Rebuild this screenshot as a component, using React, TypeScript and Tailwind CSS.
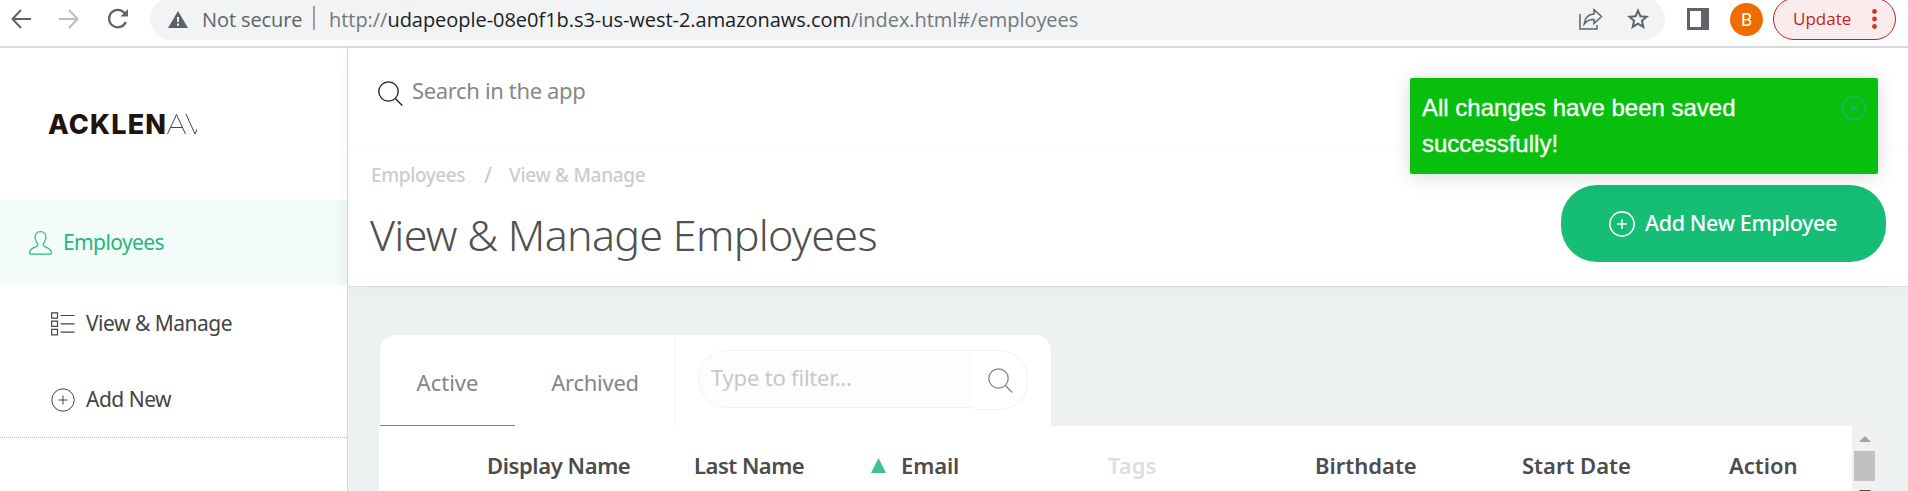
import React from "react";

type IconProps = { className?: string };

const BackArrow = ({ className = "" }: IconProps) => (
  <svg className={className} viewBox="0 0 20 20" fill="none" stroke="currentColor" strokeWidth="2">
    <path d="M20 10H2M10 1L1.5 10L10 19" />
  </svg>
);

const SearchIcon = ({ className = "" }: IconProps) => (
  <svg className={className} viewBox="0 0 25 25" fill="none" stroke="currentColor" strokeWidth="1.3">
    <circle cx="10.5" cy="10.5" r="9.7" />
    <path d="M17.3 17.5L24.3 24.5" />
  </svg>
);

const PlusCircle = ({ className = "" }: IconProps) => (
  <svg className={className} viewBox="0 0 24 24" fill="none" stroke="currentColor">
    <circle cx="12" cy="12" r="11.2" />
    <path d="M12 7.5V16.5M7.5 12H16.5" />
  </svg>
);

const UserIcon = () => (
  <svg className="h-6 w-[23px]" viewBox="0 0 23 24" fill="none" stroke="#2dba78" strokeWidth="1.2">
    <path d="M8.6 12.2C7 11 6.6 9.6 6.5 8.3C5.9 7.9 5.8 6.6 6.3 6C6 2.6 8 .7 11.5 .7S17 2.6 16.7 6C17.2 6.6 17.1 7.9 16.5 8.3C16.4 9.6 16 11 14.4 12.2V14.6C15 16 22.3 17.2 22.3 21V22.4Q22.3 23.2 21.4 23.2H1.6Q.7 23.2 .7 22.4V21C.7 17.2 8 16 8.6 14.6Z" />
  </svg>
);

const ListIcon = () => (
  <svg className="h-6 w-6" viewBox="0 0 24 24" fill="none" stroke="#444" strokeWidth="1.2">
    <path d="M.7 .9H6.5V6.1H.7ZM.7 9.1H6.5V14.3H.7ZM.7 17.4H6.5V22.8H.7ZM9.5 3.5H23.5M9.5 11.9H23.5M9.5 20.2H23.5" />
  </svg>
);

const columns = [
  { label: "Display Name", cls: "tracking-[-0.4px]" },
  { label: "Last Name", cls: "tracking-[-0.5px]" },
  { label: "Email", cls: "tracking-[-0.1px]", sorted: true },
  { label: "Tags", cls: "text-[#dedede]" },
  { label: "Birthdate", cls: "" },
  { label: "Start Date", cls: "" },
  { label: "Action", cls: "" },
];

function BrowserBar() {
  return (
    <header className="flex h-12 shrink-0 items-start overflow-hidden border-b-2 border-[#dcdcdc] bg-white font-['Open_Sans',sans-serif]">
      <div className="flex w-[150px] shrink-0 items-center gap-7 pt-[7px] pl-[11px] text-[#5f6368]">
        <BackArrow className="h-5 w-5" />
        <BackArrow className="h-5 w-5 rotate-180 text-[#bcbdbf]" />
        <svg className="h-6 w-[22px]" viewBox="0 0 22 24" fill="none" stroke="currentColor" strokeWidth="2.2">
          <path d="M17.5 6A8.7 8.7 0 1 0 18.8 15" />
          <path d="M21 2V9.5H13.5Z" fill="currentColor" stroke="none" />
        </svg>
      </div>
      <div className="-mt-0.5 flex h-[42px] w-[1515px] shrink-0 items-center rounded-full bg-[#f1f3f4] pl-[18px] text-[20px] text-[#5f6368]">
        <svg className="h-[17px] w-5" viewBox="0 0 20 17">
          <path d="M10 0L20 17H0Z" fill="#5f6368" />
          <path d="M9 6H11V11H9ZM9 12.6H11V14.7H9Z" fill="#f1f3f4" />
        </svg>
        <span className="mt-0.5 ml-[14px] w-[111px] shrink-0 tracking-[-0.1px] whitespace-nowrap">Not secure</span>
        <span className="-mt-0.5 h-6 w-0.5 bg-[#9aa0a6]" />
        <span className="mt-0.5 ml-[14px] tracking-[-0.04px] whitespace-nowrap text-[#73777b]">
          http://<span className="text-[#202124]">udapeople-08e0f1b.s3-us-west-2.amazonaws.com</span>/index.html#/employees
        </span>
        <svg className="mr-[24px] ml-auto h-[22px] w-6" viewBox="0 0 24 22" fill="none" stroke="#5f6368" strokeWidth="1.5">
          <path d="M1 6V21H18V17M15 1.8V6C9 6.3 6 9.5 5.2 16C8 12.3 11 11.3 15 11.4V15.5L22.5 8.5Z" />
        </svg>
        <svg className="mr-4 h-[22px] w-[22px]" viewBox="0 0 22 22" fill="none" stroke="#5f6368" strokeWidth="2">
          <path d="M11 2.6L13.4 8.2L19.6 8.8L14.9 12.8L16.3 18.9L11 15.7L5.7 18.9L7.1 12.8L2.4 8.8L8.6 8.2Z" />
        </svg>
      </div>
      <svg className="mt-2 ml-[22px] h-[22px] w-[22px] shrink-0" viewBox="0 0 22 22" fill="#5f6368">
        <path fillRule="evenodd" d="M0 0H22V22H0ZM3 3V19H14V3Z" />
      </svg>
      <div className="mt-[3px] ml-[21px] flex h-[33px] w-[33px] shrink-0 items-center justify-center rounded-full bg-[#f06c00] font-['Roboto',sans-serif] text-[18px] text-white">B</div>
      <div className="-mt-0.5 ml-[10px] flex h-[42px] w-[123px] shrink-0 items-center rounded-full border-[1.5px] border-[#c5221f] bg-[#faecec] pl-[19px] text-[17px] text-[#c5221f]">
        <span className="w-[79px]">Update</span>
        <svg className="h-5 w-[5px]" viewBox="0 0 5 20" fill="#d93025">
          <circle cx="2.5" cy="2.5" r="2.4" />
          <circle cx="2.5" cy="10" r="2.4" />
          <circle cx="2.5" cy="17.5" r="2.4" />
        </svg>
      </div>
    </header>
  );
}

function Sidebar() {
  return (
    <aside className="w-[348px] shrink-0 border-r border-[#d9d9d9] bg-white text-[21px] text-[#444]">
      <div className="h-[152px] pt-[62px] pl-12">
        <div className="flex h-7 w-[149px] items-center font-['Inter',sans-serif] text-[27px] leading-7 whitespace-nowrap text-[#1f1410]">
          <span className="mt-px w-[119px] shrink-0 font-extrabold tracking-[1.2px]">ACKLEN</span>
          <svg className="h-5 w-[30px] shrink-0" viewBox="0 0 30 20" fill="none" stroke="#4b4340">
            <path d="M.5 20L9.5 .5L18.5 20M3.6 13.5H15.4M19 0L28 20L32 11" />
          </svg>
        </div>
      </div>
      <div className="flex h-[85px] items-center bg-gradient-to-r from-[#f3fcfa] from-95% to-[#eef9f6] pl-[29px] text-[#22b877]">
        <UserIcon />
        <span className="ml-[11px] tracking-[-0.6px]">Employees</span>
      </div>
      <div className="flex h-[76px] items-center pt-0.5 pl-[51px]">
        <ListIcon />
        <span className="ml-[11px] tracking-[-0.5px]">View &amp; Manage</span>
      </div>
      <div className="flex h-[77px] items-center border-b border-dotted border-[#bbb] pt-0.5 pl-[51px]">
        <PlusCircle className="h-6 w-6" />
        <span className="ml-[11px] tracking-[-0.5px]">Add New</span>
      </div>
    </aside>
  );
}

function PageHeader() {
  return (
    <div className="h-[239px] border-b border-[#dadfe0] bg-white shadow-[0_4px_20px_rgba(0,0,0,0.04)]">
      <div className="flex h-[104px] items-start border-b border-[#fafafa] pt-[33px] pl-[30px]">
        <SearchIcon className="h-[25px] w-[25px] text-[#1c1c1c]" />
        <span className="-mt-[6px] ml-[9px] text-[22px] leading-[30px] tracking-[-0.35px] text-[#878787]">Search in the app</span>
      </div>
      <div className="flex justify-between pt-px pr-[22px] pl-[23px]">
        <div>
          <div className="flex h-[45px] items-center text-[19px] font-medium text-[#ccc]">
            <span className="w-[113px] tracking-[-0.4px]">Employees</span>
            <span className="w-[25px] text-[21px]">/</span>
            <span className="tracking-[-0.3px]">View &amp; Manage</span>
          </div>
          <h1 className="-ml-px text-[43px] leading-[74px] font-[350] tracking-[-0.7px] whitespace-nowrap text-[#505050]">View &amp; Manage Employees</h1>
        </div>
        <button className="mt-8 flex h-[77px] w-[325px] items-center rounded-[36px] bg-[#15bd75] pl-12 text-[21.5px] font-medium text-white">
          <PlusCircle className="h-[26px] w-[26px] stroke-[1.4px]" />
          <span className="ml-[10px] tracking-[-0.38px]">Add New Employee</span>
        </button>
      </div>
    </div>
  );
}

function EmployeeTable() {
  return (
    <div className="pt-12 pl-8">
      <div className="flex h-[91px] w-[671px] rounded-t-[16px] bg-white text-[22px] text-[#858585]">
        <div className="flex h-full w-[135px] items-center justify-center border-b border-[#1eb47d] pt-1">Active</div>
        <div className="flex w-[160px] items-center justify-center pt-1 tracking-[-0.25px]">Archived</div>
        <div className="flex-1 border-l border-[#f3f3f3] pt-[15px] pl-[22px]">
          <div className="flex w-[330px] items-start">
            <div className="h-[58px] w-[275px] rounded-l-[28px] border border-r-0 border-[#f2f2f2] bg-[#fdfdfd] pl-3 leading-[52px] tracking-[-0.2px] text-[#c8c8c8]">Type to filter...</div>
            <div className="h-[60px] flex-1 rounded-r-[28px] border border-l-0 border-[#f2f2f2] pt-[17px] pl-[15px]">
              <SearchIcon className="h-[25px] w-[25px] text-[#858585]" />
            </div>
          </div>
        </div>
      </div>
      <div className="-ml-px flex h-[66px] overflow-hidden">
        <div className="flex w-[1473px] shrink-0 bg-white pl-[108px] text-[22px] font-semibold text-[#4c4c4c]">
          {columns.map((c) => (
            <div key={c.label} className="flex h-[79px] w-[207px] shrink-0 items-center whitespace-nowrap">
              {c.sorted && (
                <svg className="mr-[15px] -ml-[30px] h-[15px] w-[15px]" viewBox="0 0 15 15" fill="#3fc28b">
                  <path d="M7.5 0L15 15H0Z" />
                </svg>
              )}
              <span className={c.cls}>{c.label}</span>
            </div>
          ))}
        </div>
        <div className="flex w-[25px] shrink-0 flex-col items-center bg-[#f1f1f1] pt-[10px]">
          <svg className="h-[6px] w-3 shrink-0" viewBox="0 0 12 6" fill="#a3a3a3"><path d="M6 0L12 6H0Z" /></svg>
          <div className="mt-[9px] h-[30px] w-[21px] shrink-0 bg-[#c1c1c1]" />
          <svg className="mt-[9px] h-[6px] w-3 shrink-0" viewBox="0 0 12 6" fill="#505050"><path d="M0 0H12L6 6Z" /></svg>
        </div>
      </div>
    </div>
  );
}

function Toast() {
  return (
    <div className="absolute top-[78px] right-[30px] flex h-24 w-[468px] justify-between rounded-[2px] bg-[#08bf0d] pt-3 pr-3 pl-3 font-['Liberation_Sans',sans-serif] text-[24px] leading-9 text-white shadow-[0_2px_20px_rgba(0,0,0,0.15)]">
      <p className="w-[340px] [-webkit-text-stroke:0.3px_white]">All changes have been saved successfully!</p>
      <svg className="mt-[6px] h-6 w-6" viewBox="0 0 24 24" fill="none" stroke="#15b878" strokeWidth="1.3">
        <circle cx="12" cy="12" r="11.3" />
        <path d="M8.7 8.7L15.3 15.3M15.3 8.7L8.7 15.3" />
      </svg>
    </div>
  );
}

export default function App() {
  return (
    <div className="relative flex h-[491px] w-[1908px] flex-col overflow-hidden bg-[#edf1f2] font-['Noto_Sans',sans-serif]">
      <BrowserBar />
      <div className="flex flex-1">
        <Sidebar />
        <main className="min-w-0 flex-1">
          <PageHeader />
          <EmployeeTable />
        </main>
      </div>
      <Toast />
    </div>
  );
}
